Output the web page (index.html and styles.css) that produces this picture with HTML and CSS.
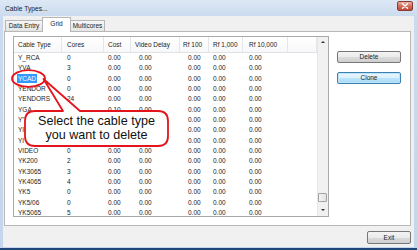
FILE: index.html
```html
<!DOCTYPE html>
<html>
<head>
<meta charset="utf-8">
<link rel="stylesheet" href="styles.css">
</head>
<body>
<div class="window">
  <div class="titlebar">
    <span class="title">Cable Types...</span>
    <div class="close"><svg width="8" height="6" viewBox="0 0 8 6"><path d="M1.5 0.8 L6.5 5.2 M6.5 0.8 L1.5 5.2" stroke="#fff" stroke-width="1.4" stroke-linecap="round"/></svg></div>
  </div>
  <div class="client">
    <div class="tabs">
      <div class="tab t-data">Data Entry</div>
      <div class="tab t-grid active">Grid</div>
      <div class="tab t-multi">Multicores</div>
    </div>
    <div class="panel">
      <div class="grid">
        <div class="list">
          <div class="row head">
            <div class="c c1">Cable Type</div><div class="c c2">Cores</div><div class="c c3">Cost</div><div class="c c4">Video Delay</div><div class="c c5">Rf 100</div><div class="c c6">Rf 1,000</div><div class="c c7">Rf 10,000</div><div class="c c8"></div>
          </div>
          <div class="row"><div class="c c1">Y_RCA</div><div class="c c2">0</div><div class="c c3">0.00</div><div class="c c4">0.00</div><div class="c c5">0.00</div><div class="c c6">0.00</div><div class="c c7">0.00</div><div class="c c8"></div></div>
          <div class="row"><div class="c c1">YVA</div><div class="c c2">3</div><div class="c c3">0.00</div><div class="c c4">0.00</div><div class="c c5">0.00</div><div class="c c6">0.00</div><div class="c c7">0.00</div><div class="c c8"></div></div>
          <div class="row"><div class="c c1"><span class="sel">YCAD</span></div><div class="c c2">0</div><div class="c c3">0.00</div><div class="c c4">0.00</div><div class="c c5">0.00</div><div class="c c6">0.00</div><div class="c c7">0.00</div><div class="c c8"></div></div>
          <div class="row"><div class="c c1">YENDOR</div><div class="c c2">0</div><div class="c c3">0.00</div><div class="c c4">0.00</div><div class="c c5">0.00</div><div class="c c6">0.00</div><div class="c c7">0.00</div><div class="c c8"></div></div>
          <div class="row"><div class="c c1">YENDORS</div><div class="c c2">24</div><div class="c c3">0.00</div><div class="c c4">0.00</div><div class="c c5">0.00</div><div class="c c6">0.00</div><div class="c c7">0.00</div><div class="c c8"></div></div>
          <div class="row"><div class="c c1">YGA</div><div class="c c2">0</div><div class="c c3">0.10</div><div class="c c4">0.00</div><div class="c c5">0.00</div><div class="c c6">0.00</div><div class="c c7">0.00</div><div class="c c8"></div></div>
          <div class="row"><div class="c c1">Y"</div><div class="c c2"></div><div class="c c3"></div><div class="c c4"></div><div class="c c5">0.00</div><div class="c c6">0.00</div><div class="c c7">0.00</div><div class="c c8"></div></div>
          <div class="row"><div class="c c1">YI</div><div class="c c2"></div><div class="c c3"></div><div class="c c4"></div><div class="c c5">0.00</div><div class="c c6">0.00</div><div class="c c7">0.00</div><div class="c c8"></div></div>
          <div class="row"><div class="c c1">YI</div><div class="c c2"></div><div class="c c3"></div><div class="c c4"></div><div class="c c5">0.00</div><div class="c c6">0.00</div><div class="c c7">0.00</div><div class="c c8"></div></div>
          <div class="row"><div class="c c1">VIDEO</div><div class="c c2">0</div><div class="c c3">0.00</div><div class="c c4">0.00</div><div class="c c5">0.00</div><div class="c c6">0.00</div><div class="c c7">0.00</div><div class="c c8"></div></div>
          <div class="row"><div class="c c1">YK200</div><div class="c c2">2</div><div class="c c3">0.00</div><div class="c c4">0.00</div><div class="c c5">0.00</div><div class="c c6">0.00</div><div class="c c7">0.00</div><div class="c c8"></div></div>
          <div class="row"><div class="c c1">YK3065</div><div class="c c2">3</div><div class="c c3">0.00</div><div class="c c4">0.00</div><div class="c c5">0.00</div><div class="c c6">0.00</div><div class="c c7">0.00</div><div class="c c8"></div></div>
          <div class="row"><div class="c c1">YK4065</div><div class="c c2">4</div><div class="c c3">0.00</div><div class="c c4">0.00</div><div class="c c5">0.00</div><div class="c c6">0.00</div><div class="c c7">0.00</div><div class="c c8"></div></div>
          <div class="row"><div class="c c1">YK5</div><div class="c c2">0</div><div class="c c3">0.00</div><div class="c c4">0.00</div><div class="c c5">0.00</div><div class="c c6">0.00</div><div class="c c7">0.00</div><div class="c c8"></div></div>
          <div class="row"><div class="c c1">YK5/06</div><div class="c c2">0</div><div class="c c3">0.00</div><div class="c c4">0.00</div><div class="c c5">0.00</div><div class="c c6">0.00</div><div class="c c7">0.00</div><div class="c c8"></div></div>
          <div class="row"><div class="c c1">YK5065</div><div class="c c2">5</div><div class="c c3">0.00</div><div class="c c4">0.00</div><div class="c c5">0.00</div><div class="c c6">0.00</div><div class="c c7">0.00</div><div class="c c8"></div></div>
        </div>
        <div class="vscroll">
          <div class="arrow up"></div>
          <div class="track"><div class="thumb"></div></div>
          <div class="arrow down"></div>
        </div>
      </div>
      <div class="side">
        <div class="btn">Delete</div>
        <div class="btn default">Clone</div>
      </div>
    </div>
    <div class="footer">
      <div class="btn exit">Exit</div>
    </div>
  </div>
</div>
<div class="overlay">
  <svg class="marks" width="417" height="250" viewBox="0 0 417 250">
    <ellipse cx="28.5" cy="78.5" rx="16.5" ry="8.3" fill="none" stroke="#e4141c" stroke-width="1.8"/>
    <path d="M80 111 L158 111 Q168 111 168 121 L168 136 Q168 146 158 146 L35 146 Q25 146 25 136 L25 121 Q25 111 35 111 L63 111 L43.5 79 Z" fill="#fff" stroke="#e4141c" stroke-width="1.8" stroke-linejoin="round"/>
  </svg>
  <div class="callout-text">Select the cable type<br>you want to delete</div>
</div>
</body>
</html>
```
FILE: styles.css
```css
* { box-sizing: border-box; margin: 0; padding: 0; }
html, body { width: 417px; height: 250px; overflow: hidden; }
body {
  font-family: "Liberation Sans", Arial, sans-serif;
  font-size: 6.5px;
  color: #1c1c1c;
  position: relative;
  background: #c6d7ec;
}
.window {
  width: 417px;
  height: 250px;
  display: flex;
  flex-direction: column;
  background: linear-gradient(#dde8f5, #ccdbef 16px, #c4d6ec);
  border-bottom: 2px solid #1e4676;
}
.titlebar {
  height: 16px;
  display: flex;
  align-items: center;
  justify-content: space-between;
  padding: 0 4px 0 5px;
}
.title { font-size: 6.7px; color: #1a1a1a; }
.close {
  width: 16px;
  height: 10px;
  margin-top: -4px;
  border: 1px solid #8c3a30;
  border-radius: 2px;
  background: linear-gradient(#eab2a4, #d0705e 50%, #c0483a);
  display: flex;
  align-items: center;
  justify-content: center;
}
.close svg { display: block; }
.client {
  flex: 1;
  margin: 0 3px 1px;
  background: #f0f0f0;
  display: flex;
  flex-direction: column;
  padding: 0 3px 0 1px;
}
.tabs {
  display: flex;
  align-items: flex-end;
  height: 15px;
  padding-left: 1px;
  position: relative;
  z-index: 2;
}
.tab {
  height: 11px;
  border: 1px solid #b6b6b6;
  border-bottom: none;
  background: linear-gradient(#f6f6f6, #e4e4e4);
  line-height: 10px;
  text-align: center;
  color: #1c1c1c;
}
.t-data { width: 38px; }
.t-grid { width: 29px; }
.t-multi { width: 35px; }
.tab.active {
  height: 15px;
  background: #fff;
  margin: 0 -1px -1px;
  line-height: 12px;
  position: relative;
}
.panel {
  height: 195px;
  border: 1px solid #b8b8b8;
  background: #fff;
  display: flex;
  padding: 4px 0 0 8px;
}
.grid {
  width: 316px;
  height: 181px;
  border: 1px solid #a9a9a9;
  display: flex;
  overflow: hidden;
}
.list { width: 303px; overflow: hidden; }
.row {
  display: grid;
  grid-template-columns: 48px 42px 27px 49px 29px 34px 45px 29px;
  height: 10.33px;
  line-height: 10.33px;
  white-space: nowrap;
}
.row.head {
  height: 16px;
  line-height: 16px;
  border-bottom: 1px solid #e2e2e2;
  background: linear-gradient(#ffffff, #f7f8fa);
}
.head .c { border-right: 1px solid #e4e6ea; }
.c { overflow: visible; }
.c1 { padding-left: 4px; }
.c2 { padding-left: 5px; }
.c3 { padding-left: 4px; }
.c4 { padding-left: 8px; }
.c5 { padding-left: 8px; }
.c6 { padding-left: 4px; }
.c7 { padding-left: 6px; }
.head .c4 { padding-left: 4px; }
.head .c5 { padding-left: 3px; }
.sel {
  background: #3399ff;
  color: #fff;
  margin-left: -1px;
  padding: 1px 1px;
}
.vscroll {
  width: 11px;
  background: #f1f1f1;
  border-left: 1px solid #e6e6e6;
  display: flex;
  flex-direction: column;
}
.arrow { height: 11px; position: relative; }
.arrow::after {
  content: "";
  position: absolute;
  left: 3px;
  top: 4px;
  border-left: 2px solid transparent;
  border-right: 2px solid transparent;
}
.up::after { border-bottom: 2px solid #333; }
.down::after { border-top: 2px solid #333; }
.track { flex: 1; display: flex; flex-direction: column; justify-content: flex-end; padding-bottom: 3px; }
.thumb {
  height: 9px;
  width: 9px;
  border: 1px solid #a2a2a2;
  border-radius: 1px;
  background: linear-gradient(90deg, #f4f4f4, #e2e2e2);
}
.side {
  margin-left: 8px;
  padding-top: 15px;
  display: flex;
  flex-direction: column;
  gap: 9px;
}
.btn {
  width: 64px;
  height: 12px;
  border: 1px solid #777;
  border-radius: 2px;
  background: linear-gradient(#f3f3f3, #ebebeb 50%, #dcdcdc 50%, #cfcfcf);
  text-align: center;
  line-height: 10px;
  color: #1c1c1c;
}
.btn.default {
  border-color: #3c7fb1;
  background: linear-gradient(#eaf6fd, #d9f0fc 50%, #bee6fd 50%, #a7d9f5);
  box-shadow: inset 0 0 0 1px #bfe4f8;
}
.footer {
  display: flex;
  justify-content: flex-end;
  padding-top: 5px;
}
.btn.exit { width: 44px; height: 13px; line-height: 11px; }
.overlay {
  position: absolute;
  left: 0;
  top: 0;
  width: 417px;
  height: 250px;
  pointer-events: none;
}
.marks { position: absolute; left: 0; top: 0; }
.callout-text {
  position: absolute;
  left: 25px;
  top: 111px;
  width: 143px;
  height: 35px;
  display: flex;
  align-items: center;
  justify-content: center;
  text-align: center;
  font-family: "Liberation Sans", Arial, sans-serif;
  font-size: 12.6px;
  line-height: 13.3px;
  color: #111;
}
```
